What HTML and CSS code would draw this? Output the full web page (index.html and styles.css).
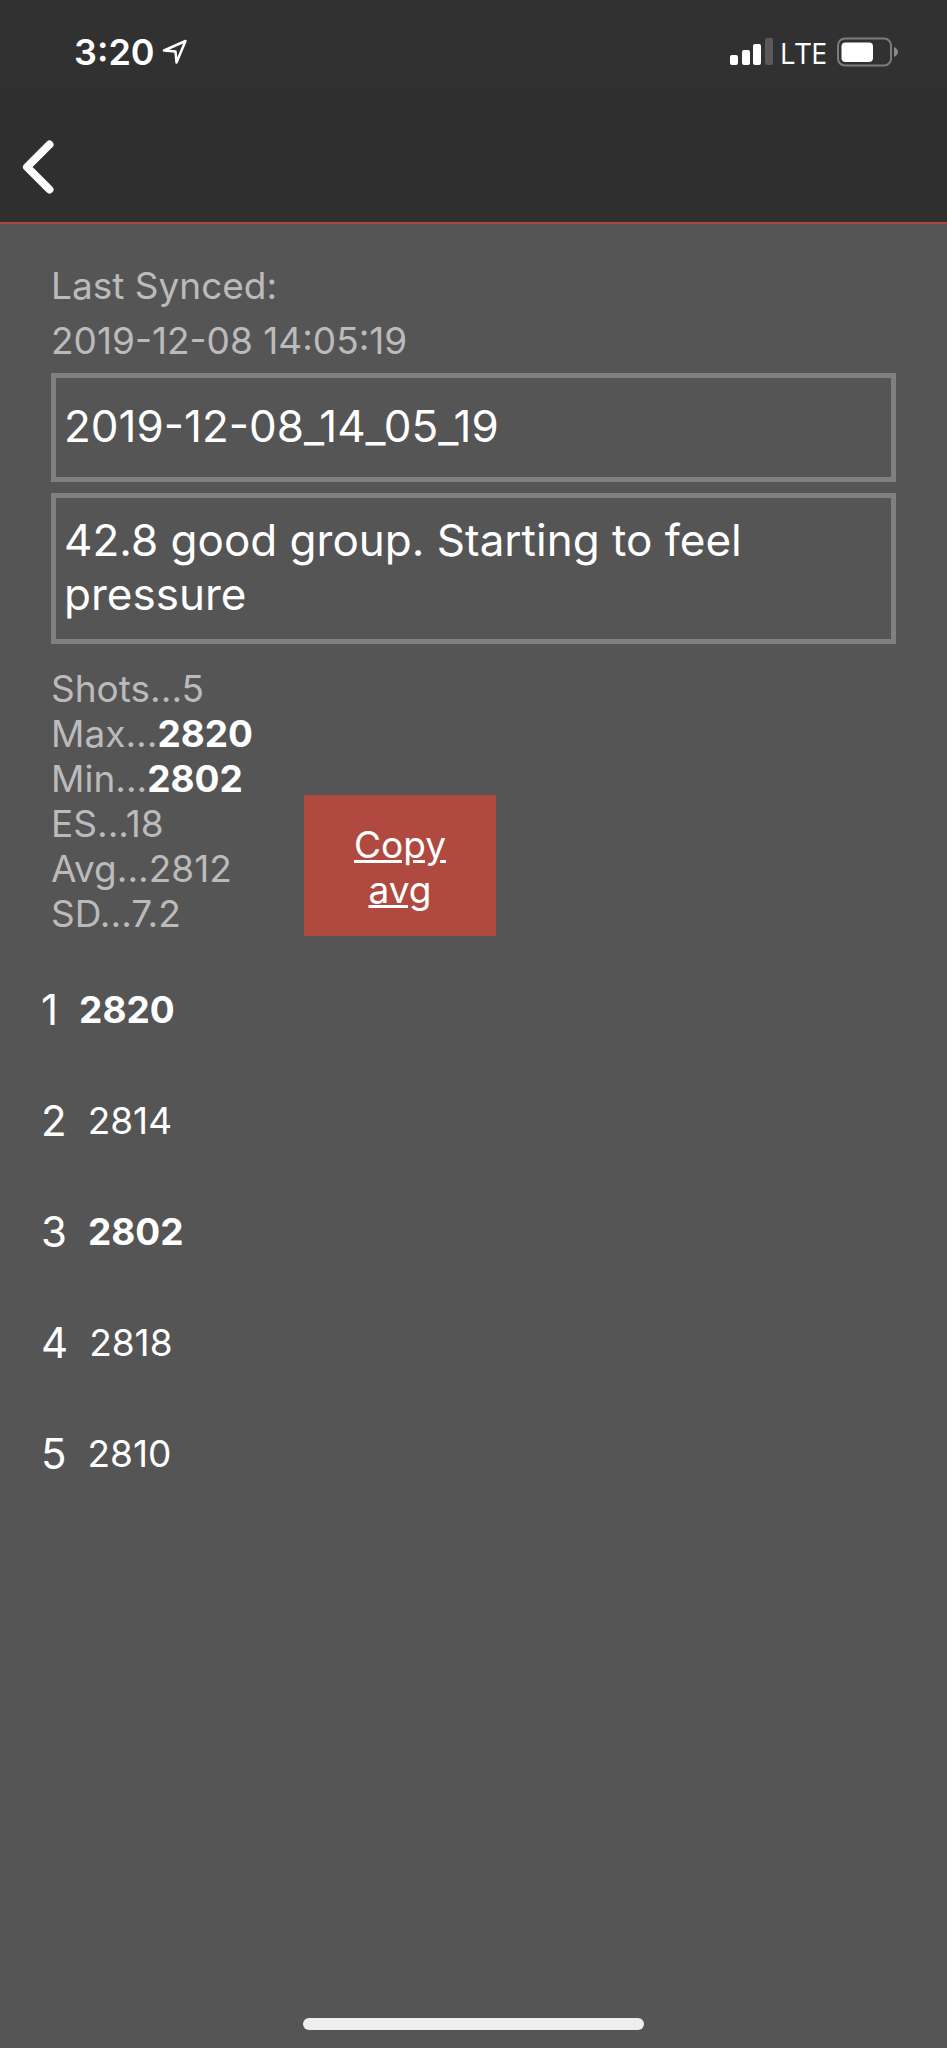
FILE: index.html
```html
<!DOCTYPE html>
<html lang="en">
<head>
    <meta charset="UTF-8">
    <meta name="viewport" content="width=device-width, initial-scale=1.0">
    <title>Shot String</title>
    <link rel="stylesheet" href="styles.css">
</head>
<body>
    <header>
        <div class="status-bar">
            <span class="time">3:20</span>
            <svg class="location" width="26" height="26" viewBox="0 0 26 26">
                <path d="M2 11.500 L23.500 2 L14.500 23.500 L13.500 12.500 Z" fill="none" stroke="#fff" stroke-width="2.500" stroke-linejoin="round"/>
            </svg>
            <svg class="signal" width="43" height="28" viewBox="0 0 43 28">
                <rect x="0" y="17" width="8" height="10" rx="2" fill="#fff"/>
                <rect x="12" y="12" width="8" height="15" rx="2" fill="#fff"/>
                <rect x="23" y="6" width="8" height="21" rx="2" fill="#fff"/>
                <rect x="35" y="0" width="8" height="27" rx="2" fill="#5a5a5a"/>
            </svg>
            <span class="network">LTE</span>
            <svg class="battery" width="61" height="30" viewBox="0 0 61 30">
                <rect x="1" y="1.500" width="53" height="27" rx="7" fill="none" stroke="#7c7c7c" stroke-width="2"/>
                <rect x="4.500" y="5.500" width="31.500" height="19.500" rx="4" fill="#fff"/>
                <path d="M57 10 Q61 12 61 15 Q61 18 57 20 Z" fill="#8a8a8a"/>
            </svg>
        </div>
        <nav>
            <button type="button" class="back" aria-label="Back">
                <svg width="32" height="54" viewBox="0 0 32 54">
                    <path d="M27.500 4.500 L5 27 L27.500 49.500" fill="none" stroke="#fff" stroke-width="8" stroke-linecap="round" stroke-linejoin="round"/>
                </svg>
            </button>
        </nav>
    </header>

    <main>
        <p class="synced">Last Synced:<br>2019-12-08 14:05:19</p>

        <input type="text" class="field" aria-label="Name" value="2019-12-08_14_05_19">
        <textarea class="field notes" aria-label="Notes" rows="2">42.8 good group. Starting to feel pressure</textarea>

        <div class="summary">
            <ul class="stats">
                <li>Shots...5</li>
                <li>Max...<b>2820</b></li>
                <li>Min...<b>2802</b></li>
                <li>ES...18</li>
                <li>Avg...2812</li>
                <li>SD...7.2</li>
            </ul>
            <button type="button" class="copy">Copy avg</button>
        </div>
    </main>

    <!-- Individual shots -->
    <ul class="shots">
        <li><span class="number">1</span><b>2820</b></li>
        <li><span class="number">2</span>2814</li>
        <li><span class="number">3</span><b>2802</b></li>
        <li><span class="number">4</span>2818</li>
        <li><span class="number">5</span>2810</li>
    </ul>

    <footer>
        <div class="home-bar"></div>
    </footer>
</body>
</html>
```

FILE: styles.css
```css
* {
    box-sizing: border-box;
}

body {
    display: flex;
    flex-direction: column;
    min-height: 100vh;
    margin: 0;
    background-color: #555;
    color: #fff;
    font-family: Inter, "Liberation Sans", sans-serif;
    font-size: 37px;
    line-height: 45px;
}

ul {
    list-style: none;
    margin: 0;
    padding: 0;
}

button {
    border: none;
    color: inherit;
    font: inherit;
    cursor: pointer;
}

svg {
    display: block;
}

/* Header */
header {
    background-color: #2f2f2f;
    border-bottom: 2px solid #a8483f;
}

.status-bar {
    display: flex;
    align-items: center;
    height: 88px;
    padding: 16px 49px 0 74px;
    background-color: #313131;
}

.time {
    font-size: 36px;
    font-weight: 600;
}

.location {
    margin-left: 7px;
}

.signal {
    margin-left: auto;
}

.network {
    margin: 0 10px 0 7px;
    font-family: "Open Sans", sans-serif;
    font-size: 29px;
    font-weight: 500;
}

nav {
    padding: 52px 22px 28px;
}

.back {
    display: block;
    padding: 0;
    background: none;
}

/* Session details */
main {
    padding: 34px 51px 0;
}

.synced {
    margin: 0 0 5px;
    color: #bbb;
    line-height: 55px;
}

.field {
    display: block;
    width: 100%;
    height: 109px;
    padding: 0 8px 4px;
    border: 5px solid #808080;
    border-radius: 0;
    background: none;
    color: #fff;
    font-family: inherit;
    font-size: 44px;
    line-height: 54px;
    outline: none;
}

.notes {
    height: 151px;
    margin-top: 11px;
    padding-top: 15px;
    resize: none;
    overflow: hidden;
}

.summary {
    display: flex;
    align-items: flex-end;
    margin-top: 22px;
}

.stats {
    width: 253px;
    color: #bbb;
}

b {
    color: #fff;
    font-weight: 700;
}

.copy {
    width: 192px;
    padding: 27px 46px 24px;
    background-color: #b04a40;
    text-decoration: underline;
}

/* Shot list */
.shots {
    padding: 18px 41px 0;
}

.shots li {
    display: flex;
    align-items: center;
    gap: 21px;
    height: 111px;
}

.number {
    font-size: 42px;
}

footer {
    margin-top: auto;
    padding: 18px 0;
}

.home-bar {
    width: 36%;
    height: 12px;
    margin: 0 auto;
    border-radius: 6px;
    background-color: #eee;
}
```
